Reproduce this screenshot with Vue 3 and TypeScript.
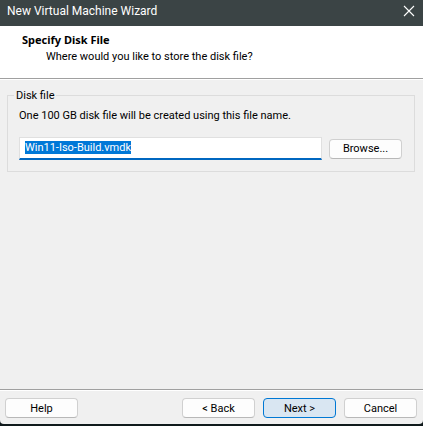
<script setup lang="ts">
import { onMounted, ref } from 'vue'

const fileName = ref('Win11-Iso-Build.vmdk')
const fileInput = ref<HTMLInputElement | null>(null)

onMounted(() => {
  fileInput.value?.focus()
  fileInput.value?.select()
})
</script>

<template>
  <form class="wizard" @submit.prevent>
    <header class="titlebar">
      <span class="title">New Virtual Machine Wizard</span>
      <button class="close" type="button" aria-label="Close">
        <svg width="12" height="12" viewBox="0 0 12 12" aria-hidden="true">
          <path d="M1 1L11 11M11 1L1 11" fill="none" stroke="#fff" stroke-width="1.1" />
        </svg>
      </button>
    </header>

    <section class="heading">
      <h1>Specify Disk File</h1>
      <p>Where would you like to store the disk file?</p>
    </section>

    <main class="content">
      <fieldset class="group">
        <legend>Disk file</legend>
        <label for="disk-file">One 100 GB disk file will be created using this file name.</label>
        <div class="file-row">
          <input id="disk-file" ref="fileInput" v-model="fileName" type="text" spellcheck="false" />
          <button class="btn" type="button">Browse...</button>
        </div>
      </fieldset>
    </main>

    <footer class="actions">
      <button class="btn help" type="button">Help</button>
      <button class="btn" type="button">&lt; Back</button>
      <button class="btn primary" type="submit">Next &gt;</button>
      <button class="btn" type="button">Cancel</button>
    </footer>
  </form>
</template>

<style>
body {
  margin: 0;
  background: #101a1c;
}
</style>

<style scoped>
.wizard {
  box-sizing: border-box;
  display: flex;
  flex-direction: column;
  min-height: 100vh;
  border-bottom: 2px solid #101a1c;
  background: #101a1c;
  color: #000;
  font-family: Roboto, "Noto Sans", sans-serif;
  font-size: 11px;
  line-height: 13px;
}

.titlebar {
  display: flex;
  align-items: center;
  justify-content: space-between;
  height: 26px;
  padding: 0 8px 5px 7px;
  box-sizing: border-box;
  background: #3b4445;
  color: #fff;
}

.title {
  font-size: 12px;
  line-height: 16px;
}

.close {
  display: flex;
  padding: 0;
  border: 0;
  background: none;
}

.heading {
  box-sizing: border-box;
  height: 53px;
  padding: 7px 22px 0;
  border-bottom: 1px solid #a0a0a0;
  background: #fff;
}

h1 {
  margin: 0;
  font-family: "Noto Sans", sans-serif;
  font-size: 11px;
  line-height: 13px;
}

p {
  margin: 4px 0 0 24px;
}

.content {
  flex: 1;
  padding: 10px 8px 0 7px;
  background: #f0f0f0;
  box-shadow: inset 0 1px #fff;
}

.group {
  min-width: 0;
  margin: 0;
  padding: 7px 12px 11px 11px;
  border: 1px solid #dcdcdc;
}

legend {
  margin-left: -5px;
  padding: 0 2px;
}

label {
  display: block;
}

.file-row {
  display: flex;
  align-items: center;
  gap: 7px;
  margin-top: 15px;
}

input {
  box-sizing: border-box;
  flex: 1;
  min-width: 0;
  height: 23px;
  padding: 0 5px 2px;
  border: 1px solid #e0e0e0;
  border-bottom: 2px solid #0067c0;
  outline: 0;
  background: #fff;
  color: #000;
  font: inherit;
}

input::selection {
  background: #0078d7;
  color: #fff;
}

.btn {
  box-sizing: border-box;
  width: 73px;
  height: 20px;
  padding: 0;
  border: 1px solid #d0d0d0;
  border-bottom-color: #b8b8b8;
  border-radius: 4px;
  background: #fdfdfd;
  color: #000;
  font: inherit;
}

.primary {
  border-color: #0078d4;
  background: #d9e6f2;
}

.actions {
  display: flex;
  gap: 8px;
  padding: 8px 6px 6px 5px;
  border-top: 1px solid #a0a0a0;
  border-radius: 0 0 4px 4px;
  background: #f0f0f0;
  box-shadow: inset 0 1px #fff;
}

.help {
  margin-right: auto;
}
</style>
